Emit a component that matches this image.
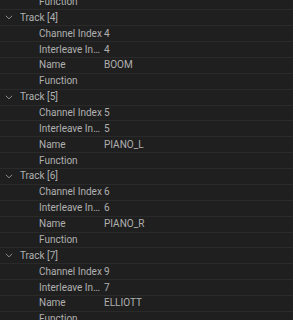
import React from 'react';

type Track = {
  index: number;
  channel: number;
  interleave: number;
  name: string;
};

const TRACKS: Track[] = [
  { index: 4, channel: 4, interleave: 4, name: 'BOOM' },
  { index: 5, channel: 5, interleave: 5, name: 'PIANO_L' },
  { index: 6, channel: 6, interleave: 6, name: 'PIANO_R' },
  { index: 7, channel: 9, interleave: 7, name: 'ELLIOTT' },
];

const rowCls =
  'flex items-center h-[15.87px] border-b border-[#2a2a2a] text-[10px] leading-none text-[#b0b0b0]';

function Chevron() {
  return (
    <svg width="8" height="5" viewBox="0 0 8 5" className="ml-[5px] mr-[7px]">
      <path d="M0.8 0.8 L4 3.8 L7.2 0.8" fill="none" stroke="#8a8a8a" strokeWidth="1" />
    </svg>
  );
}

function PropRow({ label, value }: { label: string; value?: string | number }) {
  return (
    <div className={rowCls}>
      <span className="pl-[39px] w-[103px] shrink-0 truncate pr-[1px]">{label}</span>
      <span className="pl-[1px]">{value}</span>
    </div>
  );
}

export default function App() {
  return (
    <div
      className="w-[293px] h-[320px] overflow-hidden bg-[#1f1f1f]"
      style={{ fontFamily: 'Roboto, "Noto Sans", sans-serif' }}
    >
      <div className="-mt-[5.4px]">
        <PropRow label="Function" />
        {TRACKS.map((t) => (
          <React.Fragment key={t.index}>
            <div className={rowCls}>
              <Chevron />
              <span>Track [{t.index}]</span>
            </div>
            <PropRow label="Channel Index" value={t.channel} />
            <PropRow label="Interleave Index" value={t.interleave} />
            <PropRow label="Name" value={t.name} />
            <PropRow label="Function" />
          </React.Fragment>
        ))}
      </div>
    </div>
  );
}
